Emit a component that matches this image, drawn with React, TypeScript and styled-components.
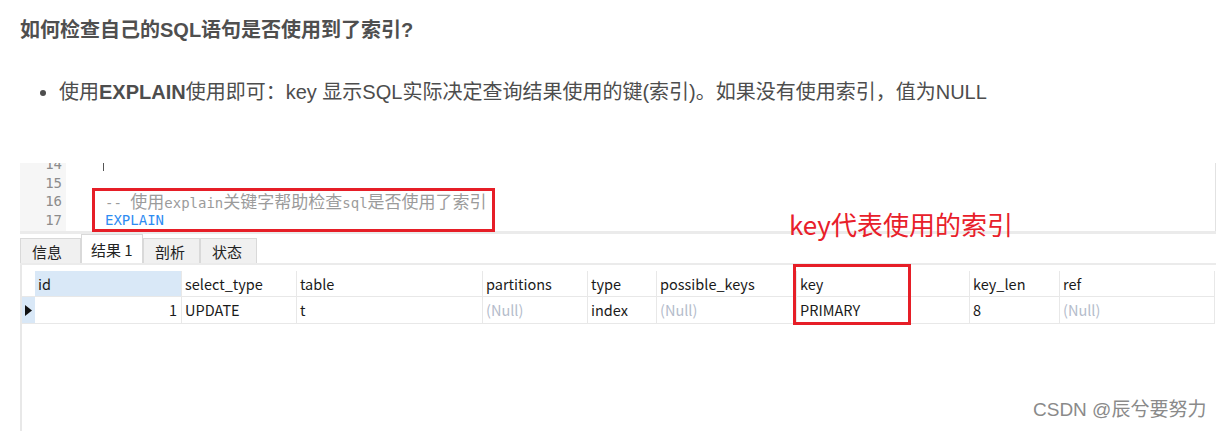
import React from "react";
import styled, { createGlobalStyle } from "styled-components";

const Global = createGlobalStyle`
  html, body { margin: 0; padding: 0; background: #fff; }
  body { font-family: "Liberation Sans", "Noto Sans CJK SC", sans-serif; }
`;

const Page = styled.div`
  width: 1217px;
  height: 431px;
  overflow: hidden;
`;

const Article = styled.article`
  padding: 16px 0 0 20px;
`;

const Heading = styled.h4`
  margin: 0;
  font-size: 20px;
  line-height: 28px;
  font-weight: 700;
  color: #4f4f4f;
`;

const List = styled.ul`
  margin: 34px 0 0 0;
  padding-left: 39px;
  color: #4d4d4d;
  font-size: 20px;
  line-height: 28px;
`;

const Item = styled.li`
  &::marker { color: #4d4d4d; }
`;

const Shot = styled.div`
  position: relative;
  margin-top: 57px;
  width: 1196px;
  height: 268px;
  display: flex;
  flex-direction: column;
`;

const Editor = styled.div`
  display: flex;
  height: 68px;
  overflow: hidden;
  border-right: 1px solid #e2e2e2;
`;

const Gutter = styled.div`
  width: 42px;
  padding-right: 4px;
  background: #f6f6f6;
  text-align: right;
  font-family: "DejaVu Sans Mono", monospace;
  font-size: 14px;
  color: #8c8c8c;
`;

const Lines = styled.div`
  margin-top: -7.75px;
`;

const LineBox = styled.div`
  height: 18.5px;
  line-height: 18.5px;
  white-space: nowrap;
`;

const Code = styled.div`
  flex: 1;
  padding-left: 39px;
  font-family: "DejaVu Sans Mono", monospace;
  font-size: 14px;
`;

const Cursor = styled.span`
  display: inline-block;
  width: 1px;
  height: 9px;
  margin-left: -2px;
  margin-top: 7px;
  vertical-align: top;
  background: #555;
`;

const Comment = styled.span`
  color: #9b9b9b;
`;

const Cjk = styled.span`
  font-family: "Noto Sans CJK SC", sans-serif;
  font-size: 17px;
`;

const Keyword = styled.span`
  color: #2e8cf2;
`;

const Rule = styled.div<{ $h: number }>`
  height: ${(p) => p.$h}px;
  background: #ebebeb;
`;

const TabBar = styled.div`
  display: flex;
  align-items: flex-end;
  height: 29px;
  background: #fff;
`;

const Tab = styled.div<{ $active?: boolean; $w: number }>`
  box-sizing: border-box;
  width: ${(p) => p.$w}px;
  height: ${(p) => (p.$active ? 29 : 25)}px;
  padding: 0 0 0 ${(p) => (p.$active ? 9 : 11)}px;
  display: flex;
  align-items: center;
  white-space: nowrap;
  background: ${(p) => (p.$active ? "#fff" : "#f0f0f0")};
  border: 1px solid #d9d9d9;
  border-bottom: none;
  font-family: "Noto Sans CJK SC", sans-serif;
  font-size: 15px;
  color: #222;
`;

const GridArea = styled.div`
  flex: 1;
  border-left: 2px solid #e8e8e8;
  padding-top: 6px;
`;

const Table = styled.div`
  display: grid;
  grid-template-columns: 13px 147px 115px 186px 105px 69px 140px 173px 90px 155px;
  font-family: "Noto Sans CJK SC", sans-serif;
  font-size: 14.5px;
  color: #1a1a1a;
`;

const Cell = styled.div<{ $h: number; $hl?: boolean; $num?: boolean; $null?: boolean }>`
  box-sizing: border-box;
  height: ${(p) => p.$h}px;
  line-height: ${(p) => p.$h - 1}px;
  padding: 0 4px 0 3px;
  border-right: 1px solid #e8e8e8;
  border-bottom: 1px solid #e8e8e8;
  background: ${(p) => (p.$hl ? "#d9e8f7" : "#fff")};
  text-align: ${(p) => (p.$num ? "right" : "left")};
  color: ${(p) => (p.$null ? "#b4bccb" : "#1a1a1a")};
  white-space: nowrap;
  overflow: hidden;
`;

const Indicator = styled.div<{ $h: number; $hl?: boolean }>`
  box-sizing: border-box;
  height: ${(p) => p.$h}px;
  display: flex;
  align-items: center;
  justify-content: center;
  background: ${(p) => (p.$hl ? "#d9e8f7" : "#fff")};
  border-bottom: 1px solid #e8e8e8;
`;

const Mark = styled.div<{ $l: number; $t: number; $w: number; $h: number }>`
  position: absolute;
  box-sizing: border-box;
  left: ${(p) => p.$l}px;
  top: ${(p) => p.$t}px;
  width: ${(p) => p.$w}px;
  height: ${(p) => p.$h}px;
  border: 3px solid #e61e27;
  pointer-events: none;
`;

const Note = styled.div`
  position: absolute;
  left: 769px;
  top: 44px;
  font-family: "Noto Sans CJK SC", sans-serif;
  font-size: 26px;
  line-height: 34px;
  color: #e8202a;
  white-space: nowrap;
`;

const Watermark = styled.div`
  position: absolute;
  left: 1013px;
  top: 235px;
  font-family: "Liberation Sans", "Noto Sans CJK SC", sans-serif;
  font-size: 19px;
  line-height: 24px;
  color: #8a8a8a;
  white-space: nowrap;
`;

const columns = ["id", "select_type", "table", "partitions", "type", "possible_keys", "key", "key_len", "ref"];
const row: { v: string; num?: boolean; nul?: boolean }[] = [
  { v: "1", num: true },
  { v: "UPDATE" },
  { v: "t" },
  { v: "(Null)", nul: true },
  { v: "index" },
  { v: "(Null)", nul: true },
  { v: "PRIMARY" },
  { v: "8" },
  { v: "(Null)", nul: true },
];

export default function App() {
  return (
    <Page>
      <Global />
      <Article>
        <Heading>如何检查自己的SQL语句是否使用到了索引?</Heading>
        <List>
          <Item>
            使用<b>EXPLAIN</b>使用即可：key 显示SQL实际决定查询结果使用的键(索引)。如果没有使用索引，值为NULL
          </Item>
        </List>
        <Shot>
          <Editor>
            <Gutter>
              <Lines>
                <LineBox>14</LineBox>
                <LineBox>15</LineBox>
                <LineBox>16</LineBox>
                <LineBox>17</LineBox>
              </Lines>
            </Gutter>
            <Code>
              <Lines>
                <LineBox>
                  <Cursor />
                </LineBox>
                <LineBox />
                <LineBox>
                  <Comment>
                    -- <Cjk>使用</Cjk>explain<Cjk>关键字帮助检查</Cjk>sql<Cjk>是否使用了索引</Cjk>
                  </Comment>
                </LineBox>
                <LineBox>
                  <Keyword>EXPLAIN</Keyword>
                </LineBox>
              </Lines>
            </Code>
          </Editor>
          <Rule $h={3} />
          <TabBar>
            <Tab $w={61}>信息</Tab>
            <Tab $w={62} $active>结果 1</Tab>
            <Tab $w={57}>剖析</Tab>
            <Tab $w={57}>状态</Tab>
          </TabBar>
          <Rule $h={2} />
          <GridArea>
            <Table>
              <Indicator $h={26} />
              {columns.map((c, i) => (
                <Cell key={c} $h={26} $hl={i === 0}>
                  {c}
                </Cell>
              ))}
              <Indicator $h={27} $hl>
                <svg width="7" height="11" viewBox="0 0 7 11">
                  <path d="M0 0 L7 5.5 L0 11 Z" fill="#111" />
                </svg>
              </Indicator>
              {row.map((c, i) => (
                <Cell key={i} $h={27} $num={c.num} $null={c.nul}>
                  {c.v}
                </Cell>
              ))}
            </Table>
          </GridArea>
          <Mark $l={72} $t={25} $w={403} $h={44} />
          <Mark $l={773} $t={101} $w={118} $h={61} />
          <Note>key代表使用的索引</Note>
          <Watermark>CSDN @辰兮要努力</Watermark>
        </Shot>
      </Article>
    </Page>
  );
}
